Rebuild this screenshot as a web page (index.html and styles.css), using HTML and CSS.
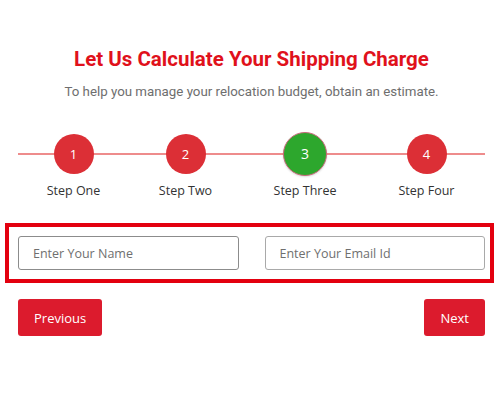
FILE: index.html
```html
<!DOCTYPE html>
<html lang="en">
<head>
<meta charset="utf-8">
<title>Shipping Charge Calculator</title>
<link rel="stylesheet" href="styles.css">
</head>
<body>
<main class="page">
  <h1 class="title">Let Us Calculate Your Shipping Charge</h1>
  <p class="subtitle">To help you manage your relocation budget, obtain an estimate.</p>

  <ol class="stepper">
    <li class="step"><span class="dot">1</span><span class="label">Step One</span></li>
    <li class="step"><span class="dot">2</span><span class="label">Step Two</span></li>
    <li class="step active"><span class="dot">3</span><span class="label">Step Three</span></li>
    <li class="step"><span class="dot">4</span><span class="label">Step Four</span></li>
  </ol>

  <div class="fields">
    <input class="field" type="text" placeholder="Enter Your Name" autofocus>
    <input class="field" type="email" placeholder="Enter Your Email Id">
  </div>

  <div class="actions">
    <button class="btn" type="button">Previous</button>
    <button class="btn" type="button">Next</button>
  </div>
</main>
</body>
</html>
```
FILE: styles.css
```css
* { box-sizing: border-box; }

html, body {
  margin: 0;
  background: #ffffff;
}

.page {
  padding: 47px 15px 0 18px;
  font-family: "Open Sans", "Noto Sans", sans-serif;
  color: #333;
}

.title {
  margin: 0;
  text-align: center;
  font-family: Roboto, "Liberation Sans", sans-serif;
  font-weight: 700;
  font-size: 20.5px;
  line-height: 24px;
  color: #e0111b;
}

.subtitle {
  margin: 13px 0 0;
  text-align: center;
  font-family: Roboto, "Liberation Sans", sans-serif;
  font-size: 13.3px;
  line-height: 16px;
  color: #6e6e6e;
}

.stepper {
  position: relative;
  list-style: none;
  margin: 34px 0 0;
  padding: 0;
  display: grid;
  grid-template-columns: 111px 113px 126px 117px;
}

.stepper::before {
  content: "";
  position: absolute;
  left: 0;
  right: 0;
  top: 19px;
  height: 2px;
  background: #ee8c8c;
}

.step {
  position: relative;
  display: flex;
  flex-direction: column;
  align-items: center;
}

.dot {
  width: 40px;
  height: 40px;
  border-radius: 50%;
  background: #dc2f36;
  color: #fff;
  display: flex;
  align-items: center;
  justify-content: center;
  font-size: 13px;
  line-height: 1;
}

.step.active .dot {
  width: 44px;
  height: 44px;
  margin: -2px 0;
  background: #2da72d;
  border: 1.5px solid #c9687a;
  box-shadow: 0 1px 2px rgba(0, 0, 0, 0.15);
  font-size: 14px;
}

.label {
  margin-top: 8px;
  font-size: 12.5px;
  line-height: 18px;
  color: #333;
}

.fields {
  margin: 23px -9px 0 -13px;
  padding: 9px 5px 9px 9px;
  border: 4px solid #e3000f;
  display: grid;
  grid-template-columns: 1fr 1fr;
  column-gap: 26px;
}

.field {
  height: 34px;
  padding: 0 14px;
  border: 1px solid #a9a9a9;
  border-radius: 3px;
  font-family: "Open Sans", "Noto Sans", sans-serif;
  font-size: 12.5px;
  color: #333;
  background: #fff;
  outline: none;
  caret-color: #222;
}

.field:focus {
  border-color: #8c8c8c;
}

.field::placeholder {
  color: #6f6f6f;
  opacity: 1;
}

.actions {
  margin-top: 16px;
  display: flex;
  justify-content: space-between;
}

.btn {
  height: 37px;
  padding: 0 16px;
  border: none;
  border-radius: 3px;
  background: #dc1b2d;
  color: #fff;
  font-family: "Open Sans", "Noto Sans", sans-serif;
  font-size: 13px;
  cursor: pointer;
}
```
